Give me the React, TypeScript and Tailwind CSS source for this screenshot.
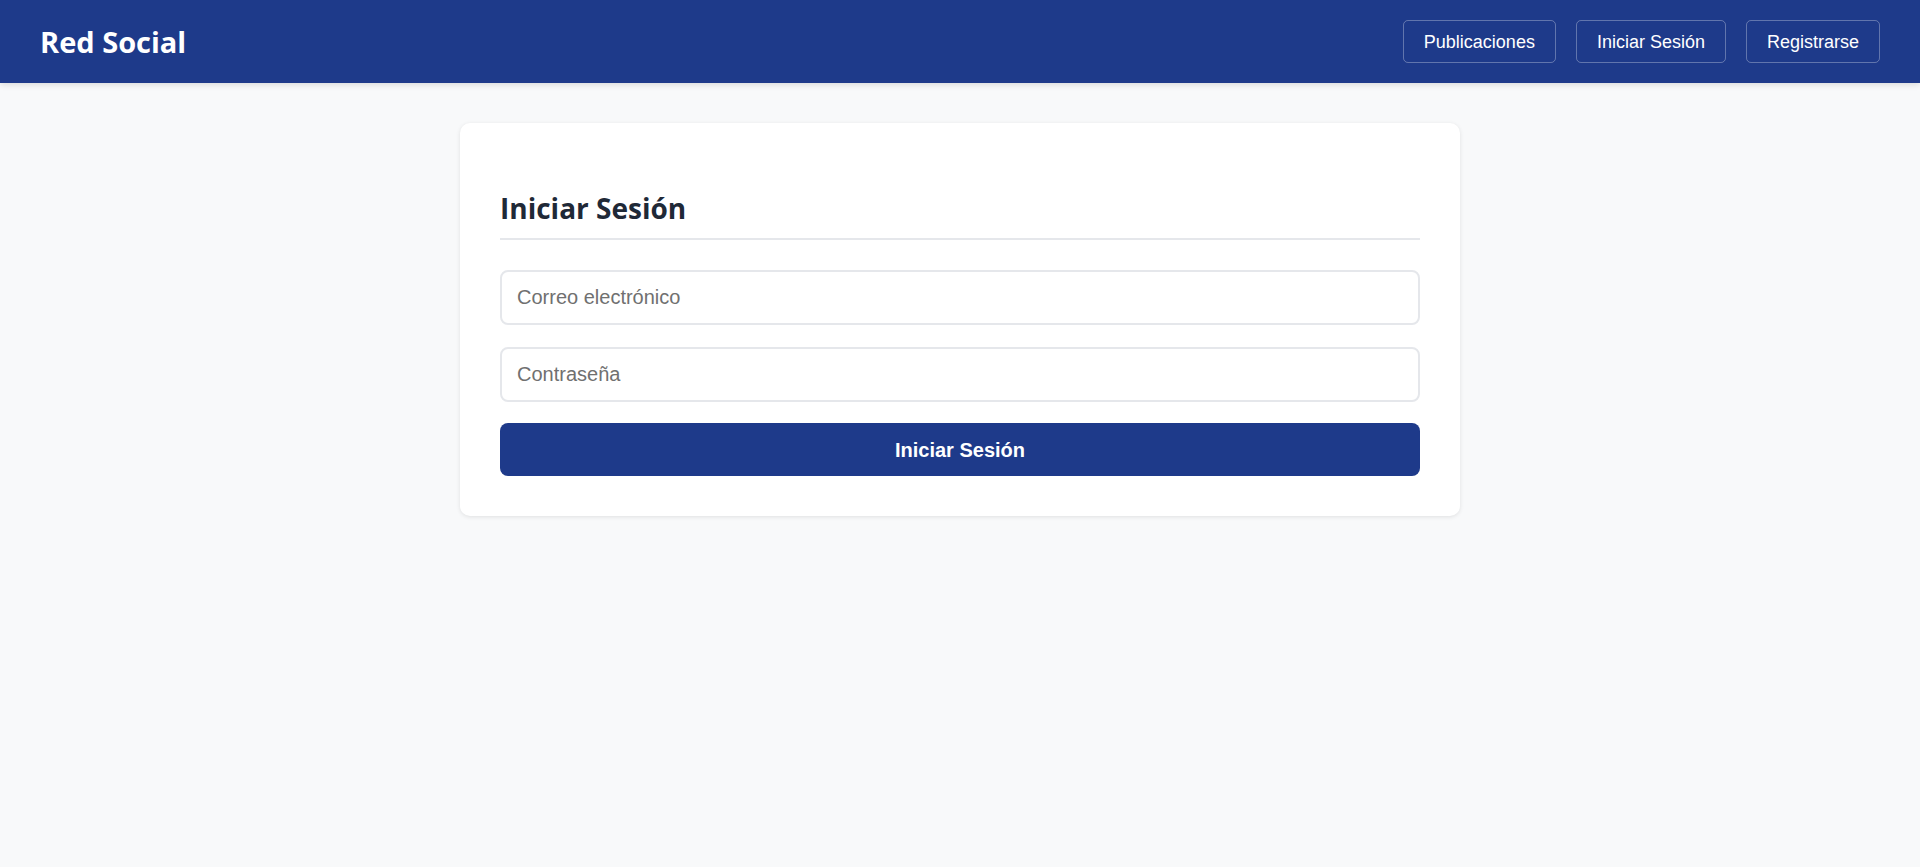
import React from "react";

export default function App() {
  const navBtn =
    "h-[43px] px-[20px] rounded-[5px] border border-white/30 text-white text-[18px] leading-none flex items-center";
  return (
    <div className="min-h-[867px] bg-[#f8f9fa]" style={{ fontFamily: '"Liberation Sans", Arial, sans-serif' }}>
      <header className="h-[83px] bg-[#1e3a8a] flex items-center justify-between px-[40px] shadow-[0_2px_6px_rgba(0,0,0,0.12)] relative">
        <h1 className="text-white text-[29px] font-bold leading-[1.5] font-['Open_Sans',sans-serif]">Red Social</h1>
        <nav className="flex gap-[20px]">
          <button className={navBtn}>Publicaciones</button>
          <button className={navBtn}>Iniciar Sesión</button>
          <button className={navBtn}>Registrarse</button>
        </nav>
      </header>
      <main className="flex justify-center pt-[40px]">
        <div className="w-[1000px] bg-white rounded-[10px] shadow-[0_1px_4px_rgba(0,0,0,0.1)] px-[40px] pt-[40px] pb-[40px]">
          <h2 className="mt-[28px] text-[28px] leading-[35px] font-bold text-[#1f2937] font-['Open_Sans',sans-serif] pb-[12px] border-b-2 border-[#e5e7eb]">
            Iniciar Sesión
          </h2>
          <form className="flex flex-col mt-[30px]" onSubmit={(e) => e.preventDefault()}>
            <input
              type="email"
              placeholder="Correo electrónico"
              className="h-[55px] w-full border-2 border-[#e5e7eb] rounded-[8px] px-[15px] text-[20px] placeholder:text-[#707070] text-[#1f2937] outline-none"
            />
            <input
              type="password"
              placeholder="Contraseña"
              className="mt-[22px] h-[55px] w-full border-2 border-[#e5e7eb] rounded-[8px] px-[15px] text-[20px] placeholder:text-[#707070] text-[#1f2937] outline-none"
            />
            <button
              type="submit"
              className="mt-[21px] h-[53px] w-full bg-[#1e3a8a] text-white text-[20px] font-bold rounded-[8px]"
            >
              Iniciar Sesión
            </button>
          </form>
        </div>
      </main>
    </div>
  );
}
